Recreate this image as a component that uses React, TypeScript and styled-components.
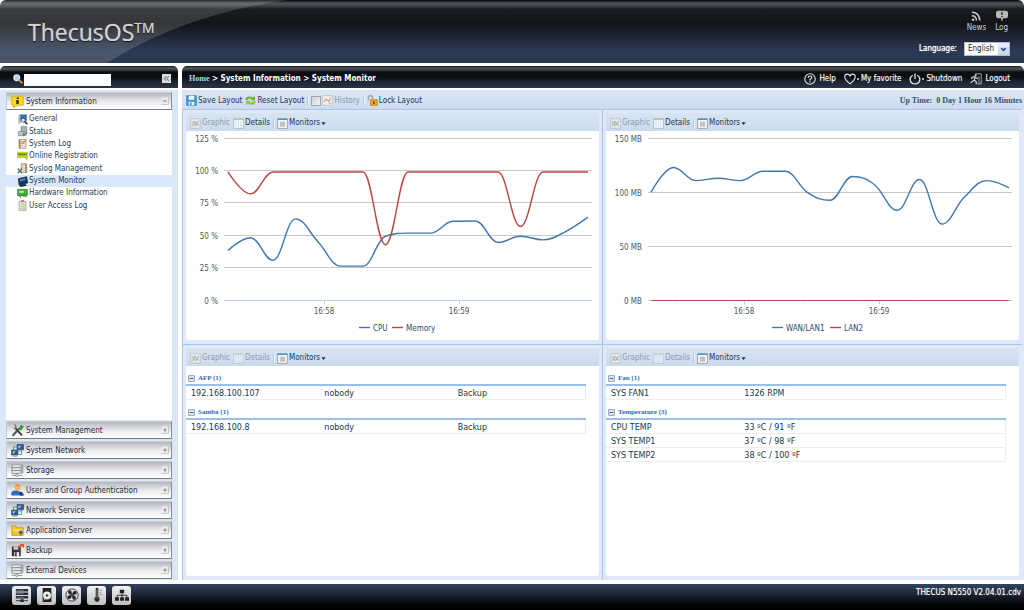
import React, { useState } from "react";
import styled, { createGlobalStyle, css } from "styled-components";

const ui = `"DejaVu Sans Condensed", "DejaVu Sans", Tahoma, sans-serif`;
const wide = `"DejaVu Sans", Verdana, sans-serif`;
const serif = `"Liberation Serif", "Times New Roman", serif`;

const GlobalStyle = createGlobalStyle`
  * { box-sizing: border-box; }
  body {
    margin: 0;
    background: #fff;
    color: #222;
    font: 8px/12px ${ui};
  }
  button, input, select { font: inherit; color: inherit; margin: 0; }
  button { padding: 0; border: 0; background: none; cursor: pointer; }
  a { color: inherit; text-decoration: none; }
  svg { display: block; flex: none; }
`;

/* ---------- page frame ---------- */

const Page = styled.div`
  min-height: 100vh;
  display: flex;
  flex-direction: column;
`;

const Masthead = styled.header`
  position: relative;
  overflow: hidden;
  height: 63px;
  margin-bottom: 3px;
  padding: 0 14px 0 28px;
  display: flex;
  justify-content: space-between;
  border-radius: 6px 6px 0 0;
  background: linear-gradient(#000 0, #4c5158 3px, #474c53 5px, #1b1c1f 9px, #131416 24px, #1f2838 38px, #2c3a55 52px, #28364e 100%);
`;

const Sweep = styled.svg`
  position: absolute;
  left: 0;
  top: 0;
`;

const Brand = styled.h1`
  position: relative;
  margin: 0;
  padding-top: 16px;
  display: flex;
  font: 400 23px/32px "Open Sans", "Noto Sans", sans-serif;
  color: #d2d2d2;
  text-shadow: 0 0 1px #b4b4b4, 0 1px 1px #000;
`;

const Trademark = styled.sup`
  font-size: 14px;
  line-height: 24px;
`;

const MastheadSide = styled.div`
  display: flex;
  flex-direction: column;
  align-items: flex-end;
  gap: 8px;
  padding-top: 10px;
  color: #fff;
`;

const QuickLinks = styled.nav`
  display: flex;
  gap: 9px;
  padding-right: 2px;
`;

const QuickLink = styled.a`
  display: flex;
  flex-direction: column;
  align-items: center;
  color: #d0d0d0;
`;

const LanguageRow = styled.label`
  display: flex;
  align-items: center;
  gap: 7px;
  text-shadow: 0 0 1px #fff;
`;

const SelectBox = styled.span`
  position: relative;
  display: block;
  text-shadow: none;
`;

const Select = styled.select`
  display: block;
  appearance: none;
  width: 46px;
  height: 14px;
  padding: 0 14px 0 3px;
  border: 1px solid #b5b8c8;
  border-radius: 0;
  background: #fff;
  color: #222;
`;

const SelectArrow = styled.span`
  position: absolute;
  right: 1px;
  top: 1px;
  width: 11px;
  height: 12px;
  display: flex;
  align-items: center;
  justify-content: center;
  background: linear-gradient(#e9f1fc, #c3d4ee);
  pointer-events: none;
`;

const Columns = styled.div`
  flex: 1;
  display: grid;
  grid-template-columns: 178px minmax(0, 1fr);
  gap: 4px;
`;

const Column = styled.div`
  display: flex;
  flex-direction: column;
  min-width: 0;
`;

const DarkBar = styled.div`
  height: 22px;
  margin-bottom: 2px;
  padding: 3px 7px 0;
  display: flex;
  align-items: center;
  border-radius: 5px 5px 0 0;
  background: linear-gradient(#111 0, #50555b 2px, #3b4046 4px, #0c0d0f 6px, #0b0d11 11px, #1d2635 16px, #27344b 100%);
  color: #fff;
`;

/* ---------- sidebar ---------- */

const Sidebar = styled.aside`
  flex: 1;
  display: flex;
  flex-direction: column;
  padding: 2px 6px 1px;
  background: #d9e7f8;
`;

const SearchBox = styled.label`
  flex: 1;
  display: flex;
  align-items: center;
  gap: 1px;
  padding-left: 6px;
`;

const SearchInput = styled.input`
  width: 87px;
  height: 12px;
  margin-top: 2px;
  padding: 0 2px;
  border: 0;
  background: #fff;
  color: #222;
`;

const CollapseButton = styled.button`
  width: 9px;
  height: 9px;
  display: flex;
  align-items: center;
  justify-content: center;
  background: #dcdcdc;
  color: #444;
`;

const SectionButton = styled.button`
  height: 18px;
  margin-bottom: 2px;
  padding: 0 2px 0 4px;
  display: flex;
  align-items: center;
  gap: 2px;
  border: 1px solid #c9cdd2;
  border-right-color: #8b8f94;
  border-bottom: 1px solid #777b80;
  background: linear-gradient(#b4b6bc 0, #cfd0d4 4px, #ececee 9px, #fff 100%);
  color: #1c2a38;
  text-align: left;

  &:last-child { margin-bottom: 0; }
`;

const SectionLabel = styled.span`
  flex: 1;
  padding-top: 2px;
`;

const TreePanel = styled.div`
  flex: 1;
  margin-top: -2px;
  margin-bottom: 1px;
  padding-top: 3px;
  background: #fff;
`;

const Tree = styled.ul`
  height: 99px;
  margin: 0;
  padding: 0;
  display: grid;
  grid-template-rows: repeat(8, 1fr);
  list-style: none;
`;

const TreeLink = styled.a<{ $current?: boolean }>`
  height: 100%;
  padding-left: 11px;
  display: flex;
  align-items: center;
  gap: 1px;
  color: #23414f;
  ${(p) => p.$current && css`background: #d9e8fb;`}
`;

/* ---------- main area ---------- */

const Crumbs = styled.nav`
  flex: 1;
  font-weight: 700;
  white-space: pre;
`;

const HomeLink = styled.a`
  font-family: ${serif};
  color: #a9dcf2;
`;

const SessionLinks = styled.nav`
  display: flex;
  align-items: center;
  gap: 8px;
  padding-right: 7px;
`;

const SessionLink = styled.a`
  display: flex;
  align-items: center;
  gap: 3px;
  text-shadow: 0 0 1px #888;
`;

const Dot = styled.span`
  width: 2px;
  height: 2px;
  margin: 0 -1px 0 -2px;
  border-radius: 1px;
  background: #ddd;
`;

const Workspace = styled.main`
  flex: 1;
  display: flex;
  flex-direction: column;
  background: #dfe8f6;
`;

const Toolbar = styled.div`
  height: 19px;
  padding: 2px 2px 0 4px;
  display: flex;
  align-items: center;
  gap: 3px;
  background: linear-gradient(#dbe6f4, #cddced);
`;

const ToolButton = styled.button`
  display: flex;
  align-items: center;
  gap: 1px;
  color: #12395a;

  &:disabled { color: #8d9aa8; cursor: default; }
  &:disabled svg { opacity: 0.5; }
`;

const Separator = styled.span`
  width: 1px;
  height: 9px;
  background: #b4c9e0;
  box-shadow: 1px 0 0 #eff5fb;
`;

const HistoryToggle = styled.label`
  display: flex;
  align-items: center;
  gap: 1px;
  color: #8d9aa8;
`;

const CheckBox = styled.input`
  appearance: none;
  width: 10px;
  height: 10px;
  border: 1px solid #a3a9ad;
  background: linear-gradient(135deg, #cfd3d6, #f3f4f4);
`;

const UpTime = styled.span`
  margin-left: auto;
  font: 700 8px/12px ${serif};
  color: #2d5372;
  white-space: pre;
`;

const Monitors = styled.div`
  flex: 1;
  display: grid;
  grid-template-columns: repeat(2, minmax(0, 1fr));
  grid-template-rows: auto 1fr;
  padding-right: 2px;
`;

const Cell = styled.section`
  display: flex;
  flex-direction: column;
  padding: 3px 3px 4px;
  border-top: 1px solid #a9c6ea;
  border-left: 1px solid #a9c6ea;
`;

const PanelToolbar = styled(Toolbar)`
  height: 18px;
  background: linear-gradient(#d8e4f2, #cbdbed);
`;

const PanelBody = styled.div`
  flex: 1;
  border-radius: 0 0 3px 3px;
  background: #fff;
`;

const ChartPicture = styled.svg`
  width: 100%;
  height: auto;
  font: 8px ${ui};
  fill: #555;
`;

const Group = styled.section`
  margin-right: 13px;
`;

const GroupTitle = styled.h2`
  height: 20px;
  margin: 0;
  padding: 7px 0 0 2px;
  border-bottom: 2px solid #99c0ec;
  font: 700 7px/11px ${serif};
  color: #2f6cab;
`;

const GroupButton = styled.button`
  display: flex;
  align-items: center;
  gap: 3px;
  font-weight: 700;
`;

const DataTable = styled.table`
  width: 100%;
  table-layout: fixed;
  border-collapse: separate;
  border-spacing: 0;
  font-family: ${wide};
`;

const DataCell = styled.td`
  height: 14px;
  padding: 3px 5px 0;
  border-bottom: 1px solid #ededed;
  color: #16384a;
  line-height: 10px;

  &:last-child { border-right: 1px solid #ededed; }
`;

/* ---------- footer ---------- */

const Footer = styled.footer`
  height: 26px;
  margin-top: 4px;
  padding: 0 3px 4px 12px;
  display: flex;
  align-items: center;
  gap: 6px;
  background: linear-gradient(#33435d, #1c2535 40%, #050607 75%, #000);
  color: #fff;
`;

const StatusButton = styled.button`
  width: 19px;
  height: 19px;
  display: flex;
  align-items: center;
  justify-content: center;
  border-radius: 3px;
  background: linear-gradient(#f2f2f2, #bcbec0);
`;

const Version = styled.span`
  align-self: flex-start;
  margin-left: auto;
  padding-top: 3px;
  text-shadow: 0 0 1px #aaa;
`;

/* ---------- icons ---------- */

type IconName = keyof typeof drawings;

const rack = (
  <>
    <path d="M1 1h12v3.500H1zM1 4.500h12V8H1zM1 8h12v3.500H1z" fill="#d3d6d9" stroke="#8d9299" />
    <path d="M2.500 2.800h8M2.500 6.300h8M2.500 9.800h8" stroke="#fafafa" />
    <path d="M14.500 1v10.500M7 11.500V13M1 14h13" stroke="#7c8289" />
    <circle cx="7" cy="14" r="1.500" fill="#eee" stroke="#7c8289" />
  </>
);

const twoScreens = (
  <>
    <path d="M3 8V3.500h4M13 8v5H9" stroke="#3f9a55" fill="none" />
    <path d="M7.500 .500h8v6.500h-8z" fill="#2457a8" stroke="#4a5563" />
    <path d="M9 2h4l-3 3.500H9z" fill="#93c5f5" />
    <path d="M.500 7.500h8v6h-8z" fill="#2457a8" stroke="#4a5563" />
    <path d="M2 9h4l-3 3H2z" fill="#93c5f5" />
    <path d="M2 15h6M10 8.500h4" stroke="#7a828c" />
  </>
);

const drawings = {
  info: (
    <>
      <path d="M1 1.500h14v11H8L3 16v-3.500H1z" fill="#ffd91c" stroke="#d9a900" />
      <path d="M7 3h2.500v2H7zM6.500 6h3v5h-3z" fill="#2b2300" />
    </>
  ),
  tools: (
    <>
      <path d="m2 14.500 8-9" stroke="#555" strokeWidth="2.500" />
      <path d="m5 5 8.500 9" stroke="#444" strokeWidth="2.500" />
      <path d="M0 3.500 2.500 5l2-.500.500-2L3.500 0Q7 0 7 4.500 5 8 0 3.500z" fill="#777" />
      <path d="m9 6 3-5 4 2-3.500 5z" fill="#2f9a3c" />
    </>
  ),
  network: twoScreens,
  storage: rack,
  users: (
    <>
      <circle cx="8" cy="4.500" r="3.500" fill="#f5b56a" />
      <path d="M4.500 4q3-4 7 0l-.500-2.500Q8-1 5 1.500z" fill="#e88d2b" />
      <path d="M0 13q0-5 6-5 4 0 5 3l1-1q4 1 4 4H1z" fill="#2a6fc4" />
      <path d="m10 9 4 1 1 4h-4z" fill="#173f7c" />
    </>
  ),
  folder: (
    <>
      <path d="M1 2.500h5l1 2h8V14H1z" fill="#f7c52c" stroke="#c99512" />
      <path d="M2 7h12v1H2z" fill="#fff0a8" />
      <path d="M9.500 10.500h5M12 8v5" stroke="#2a4fa4" strokeWidth="2" />
    </>
  ),
  backup: (
    <>
      <path d="M1 3h11v12H1z" fill="#343434" />
      <path d="M3 3h6v4H3z" fill="#ccc" />
      <path d="M4 10h6v5H4z" fill="#eee" />
      <path d="M5 10h2v5H5z" fill="#343434" />
      <path d="M8 4q1-3 4-2.500L11 0h5v5l-1.500-1.500Q12 2.500 10 5z" fill="#e4522b" />
    </>
  ),
  general: (
    <>
      <path d="M4 1h10v9H4z" fill="#2d6fb8" stroke="#7d8a98" />
      <path d="M2 2h3v12H2z" fill="#b0b5bb" />
      <circle cx="9" cy="9" r="3" fill="#cfe6fa" stroke="#333" />
      <path d="m11 11 4 4" stroke="#222" strokeWidth="2" />
    </>
  ),
  status: (
    <>
      <path d="M6 1h8v7H6z" fill="#a8b4bd" stroke="#6d7880" />
      <path d="M2 8h8v6H2z" fill="#c3c8cc" stroke="#6d7880" />
      <path d="M10 9h4v5h-4z" fill="#9aa5ad" />
      <path d="m8 11 2 3 5-5" stroke="#4d7b52" strokeWidth="1.500" fill="none" />
    </>
  ),
  log: (
    <>
      <path d="M3 2h10v13H3z" fill="#eee6d4" stroke="#9b8263" />
      <path d="M5 5h6M5 8h6M5 11h4" stroke="#a3a3a3" />
      <path d="m7 8 6-6 1 1-6 6z" fill="#e0633a" />
      <path d="M3 2h2v13H3z" fill="#c46a3a" />
    </>
  ),
  register: (
    <>
      <path d="M0 1h16v9h-1v4l-4-4H0z" fill="#b9da1d" />
      <path d="M2 5h12" stroke="#5b7211" strokeWidth="2.500" strokeDasharray="2 .500" />
    </>
  ),
  syslog: (
    <>
      <path d="M6 1h8v13H6z" fill="#dcd6c8" stroke="#8c8272" />
      <path d="M12 2h2v12h-2z" fill="#a87c4f" />
      <path d="m1 8 6 7M7 8l-6 7" stroke="#567b5c" strokeWidth="2" />
    </>
  ),
  monitor: (
    <>
      <path d="m2 4 12-3 1.500 9L3 13z" fill="#173a66" stroke="#0c1c33" />
      <path d="m4 5 8-2 .500 3L4 8z" fill="#3f84c9" />
      <path d="m3 13 9-2 2 3-9 2z" fill="#26313f" />
    </>
  ),
  hardware: (
    <>
      <path d="M1 2h14v9H1z" fill="#39b23a" stroke="#1f7425" />
      <path d="M3 4h7v3H3z" fill="#a9ec93" />
      <path d="M3 12h2v3M8 12h5v2" stroke="#555" fill="none" />
    </>
  ),
  access: (
    <>
      <path d="M3 2h10v13H3z" fill="#e6dfd3" stroke="#a08d75" />
      <path d="M6 0h4v3H6z" fill="#8e8e8e" />
      <path d="M6 6h5M6 9h5M6 12h5" stroke="#b2aca2" />
    </>
  ),
  search: (
    <>
      <circle cx="6" cy="6" r="4.500" fill="#a9d4fa" stroke="#e7eff7" strokeWidth="2" />
      <path d="m10 10 4 4" stroke="#c58a4e" strokeWidth="3" strokeLinecap="round" />
    </>
  ),
  save: (
    <>
      <path d="M1 1h14v14H1z" fill="#3f9bd8" stroke="#2479b5" />
      <path d="M4 1h8v6H4z" fill="#e9f5fd" />
      <path d="M4 10h8v5H4z" fill="#f4fafd" />
      <path d="M6 11h2v4H6z" fill="#2479b5" />
    </>
  ),
  reset: (
    <>
      <path d="M0 7Q1 2 7 2q3 0 5 1.500L14.500 1v6.500H8l2-2Q6 4 4 7z" fill="#6fb424" />
      <path d="M16 9q-1 5-7 5-3 0-5-1.500L1.500 15V8.500H8l-2 2q4 1.500 6-1.500z" fill="#8cc63f" />
    </>
  ),
  graph: (
    <>
      <path d="M1 1h14v14H1z" fill="#f4f4f0" stroke="#9a9a92" />
      <path d="m3 5 5 6 5-7" stroke="#c97664" fill="none" strokeWidth="1.500" />
      <path d="m3 12 4-7 6 6" stroke="#6c9b60" fill="none" strokeWidth="1.500" />
    </>
  ),
  trend: (
    <>
      <path d="M1 1h14v14H1z" fill="#efefef" stroke="#b9bdc0" />
      <path d="m3 10 3-4 4 3 3-5M10 11l2 2" stroke="#cf8f86" fill="none" strokeWidth="1.500" />
    </>
  ),
  grid: (
    <>
      <path d="M1 1h14v14H1z" fill="#fff" stroke="#93aaa6" />
      <path d="M1 1h14v2H1z" fill="#b8cf90" />
      <path d="M4.500 3v11M8 3v11M11.500 3v11" stroke="#a9d3ef" />
      <path d="M2 7h12M2 11h12" stroke="#dcebf5" />
    </>
  ),
  window: (
    <>
      <path d="M1 1h14v14H1z" fill="#fff" stroke="#77818b" />
      <path d="M1 1h14v2H1z" fill="#4a92d6" />
      <path d="M4 5h8v8H4z" fill="#d2cccc" />
      <path d="M4 7.500h8M4 10.500h8" stroke="#b6aeae" />
    </>
  ),
  lock: (
    <>
      <path d="M2 8V4q0-3 3-3t3 3v3" fill="none" stroke="#a8a8a0" strokeWidth="2" />
      <path d="M5 7h10v8H5z" fill="#f2a526" stroke="#b97412" />
      <path d="M9 9h2v4H9z" fill="#6a3f05" />
    </>
  ),
  help: (
    <>
      <circle cx="8" cy="8" r="7" fill="none" stroke="#ddd" strokeWidth="1.500" />
      <path d="M5.500 6.500q0-2.500 2.500-2.500t2.500 2q0 1.500-2.500 2.500V10M8 11v1.500" fill="none" stroke="#eee" strokeWidth="1.500" />
    </>
  ),
  heart: <path d="M8 14.500Q1 9 1 5q0-3.500 3.500-3.500Q7 1.500 8 4q1-2.500 3.500-2.500Q15 1.500 15 5q0 4-7 9.500z" fill="none" stroke="#ddd" strokeWidth="1.500" />,
  power: <path d="M5 3Q1.500 5 1.500 8.500 2 14.500 8 14.500t6.500-6Q14.500 5 11 3M8 .500V8" fill="none" stroke="#ddd" strokeWidth="1.800" />,
  logout: (
    <>
      <path d="M7 1h8v13.500H9M12 4v10" fill="none" stroke="#ccc" />
      <circle cx="7.500" cy="3" r="1.500" fill="#ddd" />
      <path d="M7 5 3 5.500 2 8M7 5 5.500 9.500 1 13M6 9.500 8.500 12l-.500 3M7.500 6l3 1.500" stroke="#ddd" fill="none" strokeWidth="1.500" />
    </>
  ),
  rss: (
    <>
      <circle cx="4" cy="13" r="1.700" fill="#c6c6c6" />
      <path d="M2.500 7.500q6 0 6 6.500M2.500 3q10 0 10.500 11" fill="none" stroke="#c6c6c6" strokeWidth="2" />
    </>
  ),
  bubble: (
    <>
      <path d="M3 1h10q3 0 3 3v4q0 3-3 3H9.500L8 15.500 6.500 11H3Q0 11 0 8V4q0-3 3-3z" fill="#b9b9b9" />
      <path d="M8 2.500v4M8 8v1.500" stroke="#222" strokeWidth="1.800" />
    </>
  ),
  server: (
    <>
      <path d="M1 1h14v3H1zM1 5h14v3H1zM1 9h14v3H1z" fill="#222c3a" />
      <path d="M2 2.500h8M2 6.500h8M2 10.500h8" stroke="#8798ab" strokeWidth=".800" />
      <path d="M1 14.500h14M8 12v2" stroke="#222c3a" />
      <path d="M6 13h4v3H6z" fill="#222c3a" />
    </>
  ),
  disk: (
    <>
      <path d="M3 0h10v16H3z" fill="#222" />
      <circle cx="8" cy="8.500" r="4.500" fill="#eee" />
      <circle cx="8" cy="8.500" r="1.500" fill="#444" />
      <path d="m4 14 4-4" stroke="#ddd" />
    </>
  ),
  fan: (
    <>
      <circle cx="8" cy="8" r="7" fill="#ddd" stroke="#333" />
      <path d="M8 8Q2 7 4 3q4-2 4 5zM8 8q1-6 5-4 2 4-5 4zM8 8q6 1 4 5-4 2-4-5zM8 8q-1 6-5 4-2-4 5-4z" fill="#24282e" />
    </>
  ),
  thermometer: (
    <>
      <path d="M6.500 0h3v10q2 1 1.500 3.500-1 2.500-3 2.500t-3-2.500Q4.500 11 6.500 10z" fill="#333" />
      <path d="M11 2.500h3M11 5h2M11 7.500h3" stroke="#888" />
      <path d="M8 2v9" stroke="#999" strokeWidth=".800" />
    </>
  ),
  topology: (
    <>
      <path d="M5.500 2h5v4h-5zM0 10.500h4.500v4H0zM5.800 10.500h4.500v4H5.800zM11.500 10.500H16v4h-4.500z" fill="#222" />
      <path d="M8 6v5M2.500 11V8.300h11V11" stroke="#222" fill="none" />
    </>
  ),
  plus: (
    <>
      <path d="M1 1h14v14H1z" fill="#e9eaec" />
      <path d="M15 1v14H1" stroke="#a3a8ad" fill="none" />
      <path d="M5 8h6M8 5v6" stroke="#666" strokeWidth="1.500" />
    </>
  ),
  minus: (
    <>
      <path d="M1 1h14v14H1z" fill="#e9eaec" />
      <path d="M15 1v14H1" stroke="#a3a8ad" fill="none" />
      <path d="M4 8h7" stroke="#555" strokeWidth="1.500" />
    </>
  ),
  groupMinus: (
    <>
      <path d="M1.500 1.500h13v13h-13z" fill="#e7eef6" stroke="#7b93ad" strokeWidth="2" />
      <path d="M4 8h8" stroke="#234a77" strokeWidth="2" />
    </>
  ),
  chevrons: <path d="M7 3 3 8l4 5M13 3 9 8l4 5" fill="none" stroke="currentColor" strokeWidth="2" />,
  caret: <path d="M1 4h14l-7 9z" fill="#12395a" />,
  chevronDown: <path d="m3 5 5 5 5-5" fill="none" stroke="#2b4f9a" strokeWidth="4" />,
};

function Icon({ name, size = 12 }: { name: IconName; size?: number }) {
  return (
    <svg width={size} height={size} viewBox="0 0 16 16" fill="none" aria-hidden="true">
      {drawings[name]}
    </svg>
  );
}

/* ---------- charts ---------- */

type Series = { name: string; color: string; values: number[]; keyX: number; width?: number };

type ChartProps = {
  label: string;
  max: number;
  step: number;
  unit: string;
  left: number;
  start: number;
  end: number;
  series: Series[];
};

const TOP = 7.5;
const BASE = 169.5;

/* Monotone-limited spline: handles never pass the neighbouring points. */
function splinePath(points: [number, number][]) {
  let d = `M${points[0][0]} ${points[0][1]}`;
  let handle: [number, number] = points[0];
  for (let i = 1; i < points.length; i++) {
    const [x, y] = points[i];
    const [px, py] = points[i - 1];
    let lx = x;
    let ly = y;
    let next: [number, number] = [x, y];
    if (i < points.length - 1) {
      const [nx, ny] = points[i + 1];
      lx = (1.5 * x + px) / 2.5;
      ly = (1.5 * y + py) / 2.5;
      const rx = (1.5 * x + nx) / 2.5;
      let ry = (1.5 * y + ny) / 2.5;
      const fix = ((ry - ly) * (rx - x)) / (rx - lx) + y - ry;
      ly += fix;
      ry += fix;
      if (ly > py && ly > y) {
        ly = Math.max(py, y);
        ry = 2 * y - ly;
      } else if (ly < py && ly < y) {
        ly = Math.min(py, y);
        ry = 2 * y - ly;
      }
      if (ry > ny && ry > y) {
        ry = Math.max(ny, y);
        ly = 2 * y - ry;
      } else if (ry < ny && ry < y) {
        ry = Math.min(ny, y);
        ly = 2 * y - ry;
      }
      next = [rx, ry];
    }
    d += `C${handle[0]} ${handle[1]} ${lx} ${ly} ${x} ${y}`;
    handle = next;
  }
  return d;
}

function Chart({ label, max, step, unit, left, start, end, series }: ChartProps) {
  const toY = (v: number) => BASE - (v / max) * (BASE - TOP);
  const ticks = Array.from({ length: max / step + 1 }, (_, i) => i * step);
  return (
    <ChartPicture viewBox="0 0 413 209" role="img" aria-label={label}>
      {ticks.map((t) => {
        const y = Math.round(toY(t)) - 0.5;
        return (
          <g key={t}>
            <path d={`M${left} ${y}H406`} stroke={t ? "#c8c8c8" : "#c0d0e0"} />
            <text x={left - 6} y={y + 3.5} textAnchor="end">{`${t} ${unit}`}</text>
          </g>
        );
      })}
      {[["16:58", 138], ["16:59", 273]].map(([time, x]) => (
        <g key={time}>
          <path d={`M${Number(x) + 0.5} 170v3`} stroke="#c0d0e0" />
          <text x={x} y="183" textAnchor="middle">{time}</text>
        </g>
      ))}
      {series.map((s) => (
        <g key={s.name}>
          <path
            d={splinePath(s.values.map((v, i) => [start + ((end - start) * i) / (s.values.length - 1), toY(v)]))}
            fill="none"
            stroke={s.color}
            strokeWidth={s.width ?? 1.4}
          />
          <path d={`M${s.keyX} 196.500h11`} stroke={s.color} strokeWidth="1.4" />
          <text x={s.keyX + 14} y="200" fill="#274b6d">{s.name}</text>
        </g>
      ))}
    </ChartPicture>
  );
}

/* ---------- data ---------- */

const BLUE = "#3f77b0";
const RED = "#b94743";

const cpu = [38.6, 48.4, 31.1, 63, 45.3, 26.5, 26.5, 49.6, 52, 52, 61.2, 61.4, 44.8, 49.6, 46.8, 53.2, 64.3];
const memory = [99.2, 82.3, 99.2, 99.2, 99.2, 99.2, 99.2, 43, 99.2, 99.2, 99.2, 99.2, 99.2, 57.1, 99.2, 99.2, 99.2];
const lan1 = [100.2, 123.1, 111, 113.2, 111, 119.7, 119.7, 99.9, 92.8, 114.8, 107, 83.5, 112, 70.8, 95.6, 111, 104.2];
const lan2 = lan1.map(() => 0);

const treeItems: [IconName, string][] = [
  ["general", "General"],
  ["status", "Status"],
  ["log", "System Log"],
  ["register", "Online Registration"],
  ["syslog", "Syslog Management"],
  ["monitor", "System Monitor"],
  ["hardware", "Hardware Information"],
  ["access", "User Access Log"],
];

const sections: [IconName, string][] = [
  ["tools", "System Management"],
  ["network", "System Network"],
  ["storage", "Storage"],
  ["users", "User and Group Authentication"],
  ["network", "Network Service"],
  ["folder", "Application Server"],
  ["backup", "Backup"],
  ["storage", "External Devices"],
];

const statusButtons: [IconName, string][] = [
  ["server", "RAID"],
  ["disk", "Disks"],
  ["fan", "Fan"],
  ["thermometer", "Temperature"],
  ["topology", "Network"],
];

/* ---------- components ---------- */

function MonitorPanel({ name, details, children }: { name: string; details?: boolean; children: React.ReactNode }) {
  return (
    <Cell aria-label={name}>
      <PanelToolbar>
        <ToolButton disabled><Icon name="graph" size={11} />Graphic</ToolButton>
        <ToolButton disabled={!details}><Icon name="grid" size={11} />Details</ToolButton>
        <Separator />
        <ToolButton><Icon name="window" size={11} />Monitors<Icon name="caret" size={5} /></ToolButton>
      </PanelToolbar>
      <PanelBody>{children}</PanelBody>
    </Cell>
  );
}

function DataGroup({ title, rows }: { title: string; rows: string[][] }) {
  const [open, setOpen] = useState(true);
  return (
    <Group>
      <GroupTitle>
        <GroupButton aria-expanded={open} onClick={() => setOpen(!open)}>
          <Icon name="groupMinus" size={7} />
          {`${title} (${rows.length})`}
        </GroupButton>
      </GroupTitle>
      {open && (
        <DataTable aria-label={title}>
          <tbody>
            {rows.map((row) => (
              <tr key={row[0]}>
                {row.map((value, i) => <DataCell key={i}>{value}</DataCell>)}
              </tr>
            ))}
          </tbody>
        </DataTable>
      )}
    </Group>
  );
}

export default function App() {
  return (
    <Page>
      <GlobalStyle />
      <Masthead>
        <Sweep width="290" height="63" viewBox="0 0 290 63" aria-hidden="true">
          <path d="M0 0H288Q185 14 107 63H0z" fill="#fff" fillOpacity=".15" />
        </Sweep>
        <Brand>ThecusOS<Trademark>TM</Trademark></Brand>
        <MastheadSide>
          <QuickLinks aria-label="Quick links">
            <QuickLink href="#news"><Icon name="rss" />News</QuickLink>
            <QuickLink href="#log"><Icon name="bubble" />Log</QuickLink>
          </QuickLinks>
          <LanguageRow>
            Language:
            <SelectBox>
              <Select defaultValue="English"><option>English</option></Select>
              <SelectArrow><Icon name="chevronDown" size={7} /></SelectArrow>
            </SelectBox>
          </LanguageRow>
        </MastheadSide>
      </Masthead>

      <Columns>
        <Column>
          <DarkBar>
            <SearchBox>
              <Icon name="search" size={10} />
              <SearchInput type="search" aria-label="Search" />
            </SearchBox>
            <CollapseButton aria-label="Collapse sidebar"><Icon name="chevrons" size={7} /></CollapseButton>
          </DarkBar>
          <Sidebar>
            <SectionButton aria-expanded="true">
              <Icon name="info" size={13} />
              <SectionLabel>System Information</SectionLabel>
              <Icon name="minus" size={8} />
            </SectionButton>
            <TreePanel>
              <Tree>
                {treeItems.map(([icon, text]) => (
                  <li key={text}>
                    <TreeLink href="#" $current={text === "System Monitor"}>
                      <Icon name={icon} size={11} />
                      {text}
                    </TreeLink>
                  </li>
                ))}
              </Tree>
            </TreePanel>
            {sections.map(([icon, text]) => (
              <SectionButton key={text} aria-expanded="false">
                <Icon name={icon} size={13} />
                <SectionLabel>{text}</SectionLabel>
                <Icon name="plus" size={8} />
              </SectionButton>
            ))}
          </Sidebar>
        </Column>

        <Column>
          <DarkBar>
            <Crumbs aria-label="Breadcrumb">
              <HomeLink href="#home">Home</HomeLink>
              {" > System Information > System Monitor"}
            </Crumbs>
            <SessionLinks aria-label="Session">
              <SessionLink href="#help"><Icon name="help" />Help</SessionLink>
              <SessionLink href="#favorite"><Icon name="heart" /><Dot />My favorite</SessionLink>
              <SessionLink href="#shutdown"><Icon name="power" /><Dot />Shutdown</SessionLink>
              <SessionLink href="#logout"><Icon name="logout" />Logout</SessionLink>
            </SessionLinks>
          </DarkBar>
          <Workspace>
            <Toolbar>
              <ToolButton><Icon name="save" size={11} />Save Layout</ToolButton>
              <ToolButton><Icon name="reset" size={11} />Reset Layout</ToolButton>
              <Separator />
              <HistoryToggle>
                <CheckBox type="checkbox" disabled />
                <Icon name="trend" size={11} />
                History
              </HistoryToggle>
              <Separator />
              <ToolButton><Icon name="lock" size={11} />Lock Layout</ToolButton>
              <UpTime>{"Up Time:  0 Day 1 Hour 16 Minutes"}</UpTime>
            </Toolbar>
            <Monitors>
              <MonitorPanel name="Processor and memory" details>
                <Chart
                  label="CPU and memory use"
                  max={125}
                  step={25}
                  unit="%"
                  left={38}
                  start={42}
                  end={402}
                  series={[
                    { name: "CPU", color: BLUE, values: cpu, keyX: 173 },
                    { name: "Memory", color: RED, values: memory, keyX: 206 },
                  ]}
                />
              </MonitorPanel>
              <MonitorPanel name="Network" details>
                <Chart
                  label="Network traffic"
                  max={150}
                  step={50}
                  unit="MB"
                  left={42}
                  start={45}
                  end={403}
                  series={[
                    { name: "WAN/LAN1", color: BLUE, values: lan1, keyX: 166 },
                    { name: "LAN2", color: RED, values: lan2, keyX: 224, width: 1 },
                  ]}
                />
              </MonitorPanel>
              <MonitorPanel name="Connected users">
                <DataGroup title="AFP" rows={[["192.168.100.107", "nobody", "Backup"]]} />
                <DataGroup title="Samba" rows={[["192.168.100.8", "nobody", "Backup"]]} />
              </MonitorPanel>
              <MonitorPanel name="Hardware">
                <DataGroup title="Fan" rows={[["SYS FAN1", "1326 RPM", ""]]} />
                <DataGroup
                  title="Temperature"
                  rows={[
                    ["CPU TEMP", "33 ºC / 91 ºF", ""],
                    ["SYS TEMP1", "37 ºC / 98 ºF", ""],
                    ["SYS TEMP2", "38 ºC / 100 ºF", ""],
                  ]}
                />
              </MonitorPanel>
            </Monitors>
          </Workspace>
        </Column>
      </Columns>

      <Footer>
        {statusButtons.map(([icon, text]) => (
          <StatusButton key={text} aria-label={text}><Icon name={icon} size={14} /></StatusButton>
        ))}
        <Version>THECUS N5550 V2.04.01.cdv</Version>
      </Footer>
    </Page>
  );
}
